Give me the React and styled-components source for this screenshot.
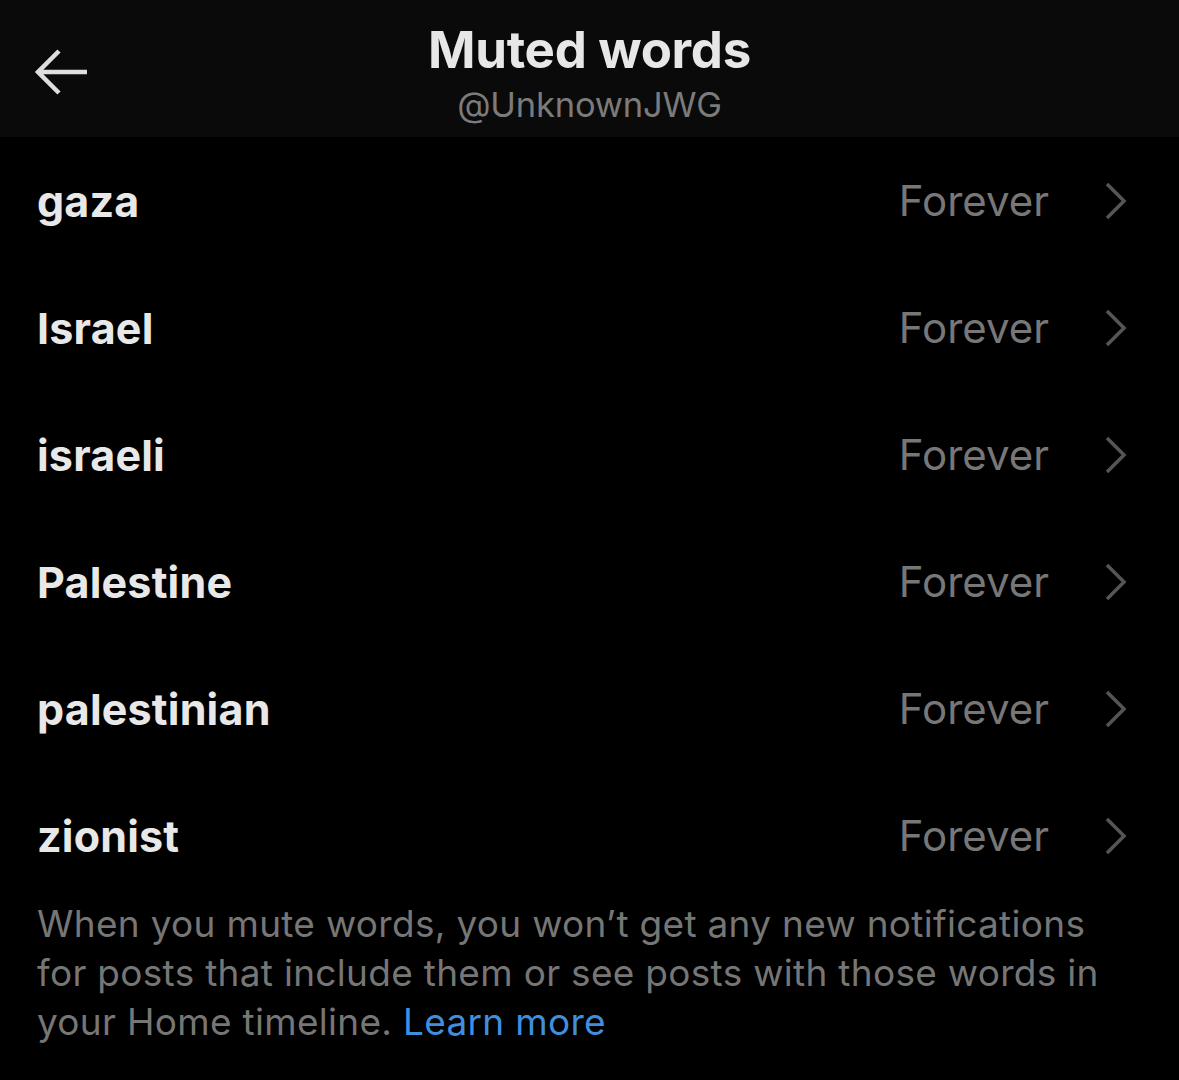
import React from "react";
import styled, { createGlobalStyle } from "styled-components";

const Global = createGlobalStyle`
  html, body { margin: 0; padding: 0; background: #000; }
  body { font-family: Inter, "Noto Sans", "Liberation Sans", sans-serif; -webkit-font-smoothing: antialiased; }
`;

const Page = styled.div`
  width: 1179px;
  height: 1080px;
  background: #000;
  overflow: hidden;
  display: flex;
  flex-direction: column;
`;

const Header = styled.header`
  height: 137px;
  background: #0a0a0a;
  position: relative;
  display: flex;
  flex-direction: column;
  align-items: center;
  box-sizing: border-box;
  padding-top: 20px;
`;

const BackButton = styled.button`
  position: absolute;
  left: 29px;
  top: 44px;
  width: 62px;
  height: 56px;
  padding: 0;
  border: none;
  background: transparent;
  display: flex;
  align-items: center;
  justify-content: center;
`;

const Title = styled.h1`
  margin: 0;
  font-size: 51px;
  line-height: 60px;
  font-weight: 700;
  color: #e7e7e7;
  letter-spacing: -0.3px;
`;

const Handle = styled.div`
  margin-top: 4px;
  font-size: 34.5px;
  line-height: 42px;
  color: #7b7b7b;
  letter-spacing: -0.2px;
`;

const List = styled.ul`
  list-style: none;
  margin: 0;
  padding: 0;
`;

const Row = styled.li`
  height: 127px;
  display: flex;
  align-items: center;
  padding: 0 50px 0 37px;
`;

const Word = styled.span`
  flex: 1;
  font-size: 43px;
  font-weight: 700;
  color: #e8e8e8;
  letter-spacing: 0.2px;
`;

const Duration = styled.span`
  font-size: 42px;
  color: #777;
  margin-right: 54px;
  letter-spacing: 0;
`;

const Footer = styled.p`
  margin: 0;
  padding: 0 60px 0 37px;
  font-size: 37px;
  line-height: 49px;
  color: #767676;
  letter-spacing: 0.3px;
`;

const Link = styled.span`
  color: #3f8fdf;
  cursor: pointer;
`;

const BackArrow = () => (
  <svg width="56" height="48" viewBox="0 0 56 48" fill="none">
    <path d="M27 3 L6 24 L27 45 M6 24 H55" stroke="#dedede" strokeWidth="4.5" strokeLinecap="butt" strokeLinejoin="miter" />
  </svg>
);

const Chevron = () => (
  <svg width="26" height="40" viewBox="0 0 26 40" fill="none">
    <path d="M4 3 L21 20 L4 37" stroke="#555" strokeWidth="3.5" />
  </svg>
);

const words = ["gaza", "Israel", "israeli", "Palestine", "palestinian", "zionist"];

export default function App() {
  return (
    <Page>
      <Global />
      <Header>
        <BackButton aria-label="Back">
          <BackArrow />
        </BackButton>
        <Title>Muted words</Title>
        <Handle>@UnknownJWG</Handle>
      </Header>
      <List>
        {words.map((w) => (
          <Row key={w}>
            <Word>{w}</Word>
            <Duration>Forever</Duration>
            <Chevron />
          </Row>
        ))}
      </List>
      <Footer>
        When you mute words, you won’t get any new notifications for posts that include them or see posts with those words in your Home timeline. <Link>Learn more</Link>
      </Footer>
    </Page>
  );
}
